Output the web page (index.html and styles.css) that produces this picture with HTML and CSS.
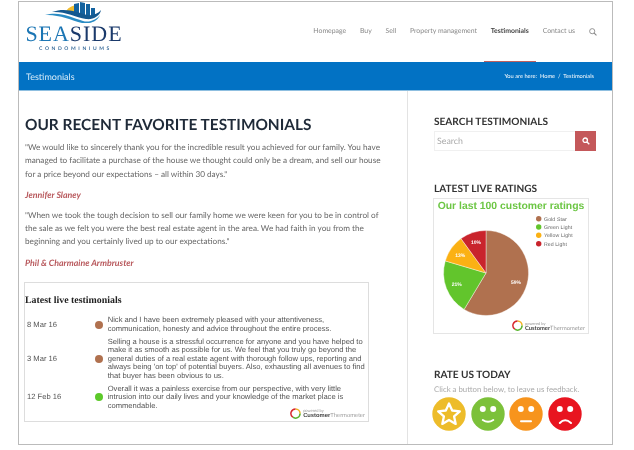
FILE: index.html
```html
<!DOCTYPE html>
<html lang="en">
<head>
  <meta charset="UTF-8">
  <title>Testimonials</title>
  <link rel="stylesheet" href="styles.css">
</head>
<body>
  <div class="frame">
    <header class="top">
      <div class="logo">
        <svg class="logo-mark" width="57" height="21" viewBox="0 0 57 21">
          <path d="M20 11 C22 6 27 3 34 3 L34 11 Z" fill="#f2bd2f"/>
          <path d="M29 2 L34 1 L34 13 L29 12 Z M35 0 L40 1 L40 14 L35 14 Z M41 2 L45 2 L45 14 L41 14 Z M46 6 L50 6 L50 13 L46 14 Z" fill="#13629f"/>
          <path d="M7 10 C20 5 32 10 42 13 C47 14 53 12 56 8 C55 14 48 18 41 17 C30 15 19 9 7 10 Z" fill="#14588f"/>
          <path d="M0 13 C14 9 26 15 38 19 C45 21 52 17 55 13 C52 20 45 22 37 21 C26 18 13 12 0 13 Z" fill="#2a8cc4"/>
        </svg>
        <div class="logo-name"><span class="logo-sea">SEA</span>SIDE</div>
        <div class="logo-sub">CONDOMINIUMS</div>
      </div>
      <nav class="menu">
        <a href="#">Homepage</a>
        <a href="#">Buy</a>
        <a href="#">Sell</a>
        <a href="#">Property management</a>
        <a href="#" class="current">Testimonials</a>
        <a href="#">Contact us</a>
        <svg class="menu-search" width="8" height="8" viewBox="0 0 9 9">
          <circle cx="3.6" cy="3.6" r="2.9" fill="none" stroke="#888" stroke-width="1"/>
          <path d="M5.6 5.6 L8.4 8.4" stroke="#888" stroke-width="1.2"/>
        </svg>
      </nav>
    </header>

    <div class="title-bar">
      <span class="title-bar-name">Testimonials</span>
      <span class="crumbs">You are here: &nbsp;Home &nbsp;/ &nbsp;Testimonials</span>
    </div>

    <div class="columns">
      <main class="content">
        <h1>OUR RECENT FAVORITE TESTIMONIALS</h1>
        <p class="quote">"We would like to sincerely thank you for the incredible result you achieved for our family. You have managed to facilitate a purchase of the house we thought could only be a dream, and sell our house for a price beyond our expectations – all within 30 days."</p>
        <p class="author">Jennifer Slaney</p>
        <p class="quote">"When we took the tough decision to sell our family home we were keen for you to be in control of the sale as we felt you were the best real estate agent in the area. We had faith in you from the beginning and you certainly lived up to our expectations."</p>
        <p class="author">Phil &amp; Charmaine Armbruster</p>

        <section class="live">
          <h3>Latest live testimonials</h3>
          <div class="live-row">
            <span class="live-date">8 Mar 16</span>
            <span class="dot brown"></span>
            <span class="live-text">Nick and I have been extremely pleased with your attentiveness,<br>communication, honesty and advice throughout the entire process.</span>
          </div>
          <div class="live-row">
            <span class="live-date">3 Mar 16</span>
            <span class="dot brown"></span>
            <span class="live-text">Selling a house is a stressful occurrence for anyone and you have helped to<br>make it as smooth as possible for us. We feel that you truly go beyond the<br>general duties of a real estate agent with thorough follow ups, reporting and<br>always being 'on top' of potential buyers. Also, exhausting all avenues to find<br>that buyer has been obvious to us.</span>
          </div>
          <div class="live-row">
            <span class="live-date">12 Feb 16</span>
            <span class="dot green"></span>
            <span class="live-text">Overall it was a painless exercise from our perspective, with very little<br>intrusion into our daily lives and your knowledge of the market place is<br>commendable.</span>
          </div>
          <div class="powered live-powered">
            <svg width="11" height="11" viewBox="0 0 12 12">
              <path d="M6 1 A5 5 0 0 1 11 6" fill="none" stroke="#f2b01e" stroke-width="1.6"/>
              <path d="M11 6 A5 5 0 0 1 3 10" fill="none" stroke="#5ab52e" stroke-width="1.6"/>
              <path d="M3 10 A5 5 0 0 1 6 1" fill="none" stroke="#d8272d" stroke-width="1.6"/>
            </svg>
            <div><small>powered by</small><br><b>Customer</b>Thermometer</div>
          </div>
        </section>
      </main>

      <aside class="side">
        <h4>SEARCH TESTIMONIALS</h4>
        <div class="search">
          <span class="search-input">Search</span>
          <span class="search-btn">
            <svg width="8" height="8" viewBox="0 0 9 9">
              <circle cx="3.6" cy="3.6" r="2.5" fill="none" stroke="#fff" stroke-width="1.5"/>
              <path d="M5.6 5.6 L8.2 8.2" stroke="#fff" stroke-width="1.6"/>
            </svg>
          </span>
        </div>

        <h4 class="ratings-head">LATEST LIVE RATINGS</h4>
        <div class="ratings">
          <div class="ratings-title">Our last 100 customer ratings</div>
          <svg class="pie" width="154" height="118" viewBox="0 0 154 118">
            <g transform="translate(52 59)" stroke="#fff" stroke-width="0.4">
              <path d="M0 0 L0 -42.5 A42.5 42.5 0 1 1 -21.9 36.4 Z" fill="#b0714f"/>
              <path d="M0 0 L-21.9 36.4 A42.5 42.5 0 0 1 -40.7 -12.1 Z" fill="#62c52c"/>
              <path d="M0 0 L-40.7 -12.1 A42.5 42.5 0 0 1 -25 -34.4 Z" fill="#fbb114"/>
              <path d="M0 0 L-25 -34.4 A42.5 42.5 0 0 1 0 -42.5 Z" fill="#c9242c"/>
            </g>
            <g class="pie-label">
              <text x="82" y="69.5">59%</text>
              <text x="22.7" y="71.5">21%</text>
              <text x="26.3" y="43">13%</text>
              <text x="42" y="29.5">10%</text>
            </g>
            <g class="legend">
              <circle cx="104.7" cy="4.7" r="2.7" fill="#b0714f"/><text x="110" y="6.7">Gold Star</text>
              <circle cx="104.7" cy="13" r="2.7" fill="#62c52c"/><text x="110" y="15">Green Light</text>
              <circle cx="104.7" cy="21.3" r="2.7" fill="#fbb114"/><text x="110" y="23.3">Yellow Light</text>
              <circle cx="104.7" cy="29.7" r="2.7" fill="#c9242c"/><text x="110" y="31.7">Red Light</text>
            </g>
          </svg>
          <div class="powered ratings-powered">
            <svg width="11" height="11" viewBox="0 0 12 12">
              <path d="M6 1 A5 5 0 0 1 11 6" fill="none" stroke="#f2b01e" stroke-width="1.6"/>
              <path d="M11 6 A5 5 0 0 1 3 10" fill="none" stroke="#5ab52e" stroke-width="1.6"/>
              <path d="M3 10 A5 5 0 0 1 6 1" fill="none" stroke="#d8272d" stroke-width="1.6"/>
            </svg>
            <div><small>powered by</small><br><b>Customer</b>Thermometer</div>
          </div>
        </div>

        <h4 class="rate-head">RATE US TODAY</h4>
        <p class="rate-note">Click a button below, to leave us feedback.</p>
        <div class="faces">
          <svg width="34" height="34" viewBox="0 0 34 34">
            <circle cx="17" cy="17" r="16.7" fill="#edbc2a"/>
            <path d="M17 6.5 L20.2 13.5 L27.8 14.3 L22.1 19.4 L23.7 26.9 L17 23 L10.3 26.9 L11.9 19.4 L6.2 14.3 L13.8 13.5 Z" fill="none" stroke="#fff" stroke-width="2.3" stroke-linejoin="round"/>
          </svg>
          <svg width="34" height="34" viewBox="0 0 34 34">
            <circle cx="17" cy="17" r="16.7" fill="#7cc13a"/>
            <circle cx="11.8" cy="12" r="3" fill="#fff"/><circle cx="22.2" cy="12" r="3" fill="#fff"/>
            <path d="M11.8 23 Q17 26.5 22.3 23" fill="none" stroke="#fff" stroke-width="2" stroke-linecap="round"/>
          </svg>
          <svg width="34" height="34" viewBox="0 0 34 34">
            <circle cx="17" cy="17" r="16.7" fill="#f7941d"/>
            <circle cx="11.8" cy="12" r="3" fill="#fff"/><circle cx="22.2" cy="12" r="3" fill="#fff"/>
            <path d="M12 24.3 L22 24.3" fill="none" stroke="#fff" stroke-width="2" stroke-linecap="round"/>
          </svg>
          <svg width="34" height="34" viewBox="0 0 34 34">
            <circle cx="17" cy="17" r="16.7" fill="#e8141f"/>
            <circle cx="11.8" cy="12" r="3" fill="#fff"/><circle cx="22.2" cy="12" r="3" fill="#fff"/>
            <path d="M11.8 26 Q17 20.5 23 26" fill="none" stroke="#fff" stroke-width="2" stroke-linecap="round"/>
          </svg>
        </div>
      </aside>
    </div>
  </div>
</body>
</html>
```

FILE: styles.css
```css
body {
  margin: 0;
  padding: 1px 0 0 18px;
  background-color: #fff;
  font-family: "Lato", sans-serif;
  text-rendering: geometricPrecision;
  overflow: hidden;
}

.frame {
  width: 593px;
  height: 442px;
  border: 1px solid #bbb;
  display: flex;
  flex-direction: column;
  filter: blur(0.3px);
}

/* header */
.top {
  height: 60px;
  display: flex;
  justify-content: space-between;
  padding-left: 5px;
  box-sizing: border-box;
}

.logo {
  width: 100px;
  text-align: center;
}

.logo-mark {
  display: block;
  margin: 0 0 0 21px;
}

.logo-name {
  font-family: "Liberation Serif", serif;
  font-size: 22px;
  line-height: 22px;
  letter-spacing: 0.95px;
  color: #1b3a6b;
  white-space: nowrap;
}

.logo-sea {
  color: #1c76b4;
}

.logo-sub {
  font-size: 5px;
  line-height: 7px;
  margin-top: 1px;
  padding-left: 3px;
  letter-spacing: 2.6px;
  font-weight: 700;
  color: #3a6c9a;
  white-space: nowrap;
}

.menu {
  display: flex;
  align-items: stretch;
  padding-right: 15px;
}

.menu a {
  font-size: 6.9px;
  color: #888;
  text-decoration: none;
  padding: 0 6.9px;
  line-height: 59px;
}

.menu a.current {
  color: #444;
  font-weight: 700;
  border-bottom: 1px solid #c0605e;
  height: 59px;
}

.menu-search {
  align-self: center;
  margin-left: 7px;
}

/* blue bar */
.title-bar {
  height: 29px;
  flex: none;
  background-color: #0272c4;
  border-bottom: 1px solid #8fbfe0;
  box-sizing: border-box;
  display: flex;
  justify-content: space-between;
  align-items: center;
  padding: 0 18px 0 7px;
  color: #fff;
}

.title-bar-name {
  font-size: 9px;
  color: #d8ecf9;
}

.crumbs {
  font-size: 5.7px;
}

/* columns */
.columns {
  flex: 1;
  display: flex;
  min-height: 0;
}

.content {
  width: 389px;
  box-sizing: border-box;
  border-right: 1px solid #e3e3e3;
  padding: 24px 6px 0 6px;
}

h1 {
  margin: 0 0 6px;
  font-size: 15.4px;
  line-height: 20px;
  font-weight: 700;
  color: #1f2a38;
  white-space: nowrap;
}

.quote {
  margin: 0;
  width: 360px;
  font-size: 8.2px;
  line-height: 13.4px;
  color: #666;
}

.author {
  margin: 6.8px 0 7.2px;
  font-size: 8.8px;
  line-height: 13.4px;
  font-style: italic;
  font-weight: 700;
  color: #b8585c;
}

.live {
  position: relative;
  width: 345px;
  height: 140px;
  margin: 13px 0 0 -1px;
  box-sizing: border-box;
  border: 1px solid #ddd;
  padding-top: 12px;
  font-family: "Liberation Sans", sans-serif;
}

.live h3 {
  margin: 0 0 9.4px;
  font-family: "Liberation Serif", serif;
  font-size: 9.9px;
  line-height: 12px;
  color: #222;
}

.live-row {
  display: flex;
  align-items: center;
  margin-bottom: 4px;
  font-size: 7.6px;
  line-height: 8.6px;
  color: #555;
}

.live-date {
  width: 70.3px;
  padding-left: 2px;
  box-sizing: border-box;
}

.dot {
  width: 8px;
  height: 8px;
  border-radius: 50%;
  flex: none;
  margin-right: 4.4px;
}

.dot.brown {
  background-color: #b0714f;
}

.dot.green {
  background-color: #5cc92a;
}

.live-text {
  white-space: nowrap;
}

.powered {
  position: absolute;
  display: flex;
  align-items: center;
  gap: 2px;
  font-size: 5.8px;
  line-height: 5px;
  color: #999;
}

.powered b {
  color: #444;
}

.powered small {
  font-size: 4px;
}

.live-powered {
  right: 3px;
  bottom: 2px;
}

/* sidebar */
.side {
  position: relative;
  flex: 1;
  padding: 25px 0 0 26px;
  box-sizing: border-box;
}

h4 {
  margin: 0;
  font-size: 10.1px;
  line-height: 13px;
  font-weight: 700;
  color: #333;
  white-space: nowrap;
}

.search {
  display: flex;
  width: 162px;
  height: 20px;
  margin-top: 2px;
}

.search-input {
  flex: 1;
  border: 1px solid #f0f0f0;
  border-right: none;
  font-size: 8.8px;
  line-height: 18px;
  color: #aaa;
  padding-left: 2px;
}

.search-btn {
  width: 21px;
  background-color: #c4585a;
  display: flex;
  align-items: center;
  justify-content: center;
}

.ratings-head {
  margin-top: 32px;
}

.ratings {
  position: relative;
  width: 156px;
  height: 136px;
  box-sizing: border-box;
  border: 1px solid #e5e5e5;
  margin: 2px 0 0 -1px;
}

.ratings-title {
  font-family: "Liberation Sans", sans-serif;
  font-size: 10.4px;
  line-height: 15px;
  font-weight: 700;
  color: #6cc644;
  text-align: center;
  white-space: nowrap;
}

.pie {
  display: block;
}

.pie-label text {
  font-family: "Liberation Sans", sans-serif;
  font-size: 5px;
  font-weight: 700;
  fill: #fff;
  text-anchor: middle;
}

.legend text {
  font-family: "Liberation Sans", sans-serif;
  font-size: 5.2px;
  letter-spacing: 0.1px;
  fill: #666;
}

.ratings-powered {
  right: 3px;
  bottom: 2px;
}

.rate-head {
  margin-top: 35px;
}

.rate-note {
  margin: 2px 0 3px;
  font-size: 7.8px;
  line-height: 10px;
  color: #aaa;
  white-space: nowrap;
}

.faces {
  display: flex;
  gap: 4.6px;
  margin-left: -2px;
}
```
